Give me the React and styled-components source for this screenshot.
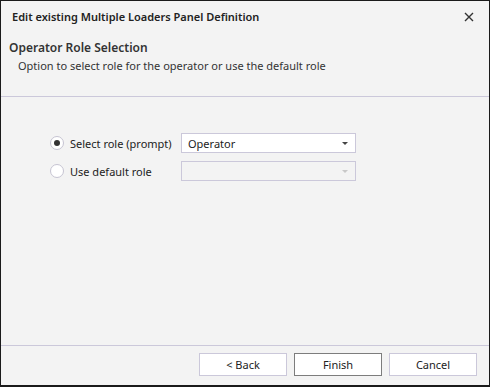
import React, { useState } from 'react';
import styled, { createGlobalStyle } from 'styled-components';

const GlobalStyle = createGlobalStyle`
  html, body {
    margin: 0;
    padding: 0;
    background: #f3f3f3;
  }
  body {
    font-family: 'Noto Sans', 'Open Sans', sans-serif;
    font-size: 11px;
    color: #1e1e1e;
  }
`;

const Window = styled.div`
  box-sizing: border-box;
  width: 490px;
  height: 387px;
  display: flex;
  flex-direction: column;
  background: #f3f3f3;
  border: 1px solid #1a1a1a;
  border-bottom-width: 2px;
`;

const TitleBar = styled.div`
  display: flex;
  align-items: center;
  justify-content: space-between;
  height: 31px;
  padding: 0 12px 0 11px;
`;

const Title = styled.span`
  font-weight: 600;
  font-size: 11px;
  color: #222;
`;

const CloseButton = styled.button`
  display: flex;
  align-items: center;
  justify-content: center;
  width: 16px;
  height: 16px;
  padding: 0;
  border: none;
  background: transparent;
  cursor: pointer;
`;

const Header = styled.div`
  display: flex;
  flex-direction: column;
  gap: 2px;
  height: 65px;
  padding: 7px 0 0 8px;
  box-sizing: border-box;
  border-bottom: 1px solid #cbc8da;
`;

const HeaderTitle = styled.div`
  font-weight: 600;
  font-size: 12px;
  color: #333;
`;

const HeaderText = styled.div`
  padding-left: 9px;
  color: #333;
`;

const Body = styled.div`
  flex: 1;
  display: grid;
  grid-template-columns: 131px 175px;
  grid-auto-rows: 20px;
  row-gap: 8px;
  align-content: start;
  padding: 36px 0 0 49px;
`;

const RadioLabel = styled.label`
  display: flex;
  align-items: center;
  gap: 6px;
  cursor: pointer;
  color: #222;
`;

const RadioCircle = styled.span`
  box-sizing: border-box;
  width: 14px;
  height: 14px;
  border-radius: 50%;
  border: 1px solid #c6c4d2;
  background: #fff;
  display: flex;
  align-items: center;
  justify-content: center;

  &::after {
    content: '';
    width: 6px;
    height: 6px;
    border-radius: 50%;
    background: #333;
    display: ${(p) => (p.$checked ? 'block' : 'none')};
  }
`;

const Select = styled.div`
  box-sizing: border-box;
  display: flex;
  align-items: center;
  justify-content: space-between;
  height: 20px;
  padding: 0 6px 0 6px;
  border: 1px solid #cbc8da;
  background: ${(p) => (p.$disabled ? '#f3f3f3' : '#fff')};
  color: #222;
`;

const Arrow = styled.span`
  width: 0;
  height: 0;
  border-left: 3.5px solid transparent;
  border-right: 3.5px solid transparent;
  border-top: 3.5px solid ${(p) => (p.$disabled ? '#c8c8c8' : '#444')};
  margin-right: 1px;
`;

const Footer = styled.div`
  display: flex;
  justify-content: flex-end;
  gap: 7px;
  height: 40px;
  padding: 7px 12px 0 0;
  box-sizing: border-box;
  border-top: 1px solid #cbc8da;
`;

const Button = styled.button`
  box-sizing: border-box;
  width: 88px;
  height: 23px;
  font-family: inherit;
  font-size: 11px;
  color: #222;
  background: #fff;
  border: 1px solid ${(p) => (p.$primary ? '#7d7d7d' : '#cbc8da')};
  cursor: pointer;
`;

const App = () => {
  const [useDefault, setUseDefault] = useState(false);

  return (
    <>
      <GlobalStyle />
      <Window>
        <TitleBar>
          <Title>Edit existing Multiple Loaders Panel Definition</Title>
          <CloseButton aria-label="Close">
            <svg width="10" height="10" viewBox="0 0 10 10">
              <path d="M1 1 L9 9 M9 1 L1 9" stroke="#333" strokeWidth="1.4" />
            </svg>
          </CloseButton>
        </TitleBar>
        <Header>
          <HeaderTitle>Operator Role Selection</HeaderTitle>
          <HeaderText>Option to select role for the operator or use the default role</HeaderText>
        </Header>
        <Body>
          <RadioLabel onClick={() => setUseDefault(false)}>
            <RadioCircle $checked={!useDefault} />
            Select role (prompt)
          </RadioLabel>
          <Select>
            Operator
            <Arrow />
          </Select>
          <RadioLabel onClick={() => setUseDefault(true)}>
            <RadioCircle $checked={useDefault} />
            Use default role
          </RadioLabel>
          <Select $disabled>
            <span />
            <Arrow $disabled />
          </Select>
        </Body>
        <Footer>
          <Button>&lt; Back</Button>
          <Button $primary>Finish</Button>
          <Button>Cancel</Button>
        </Footer>
      </Window>
    </>
  );
};

export default App;
